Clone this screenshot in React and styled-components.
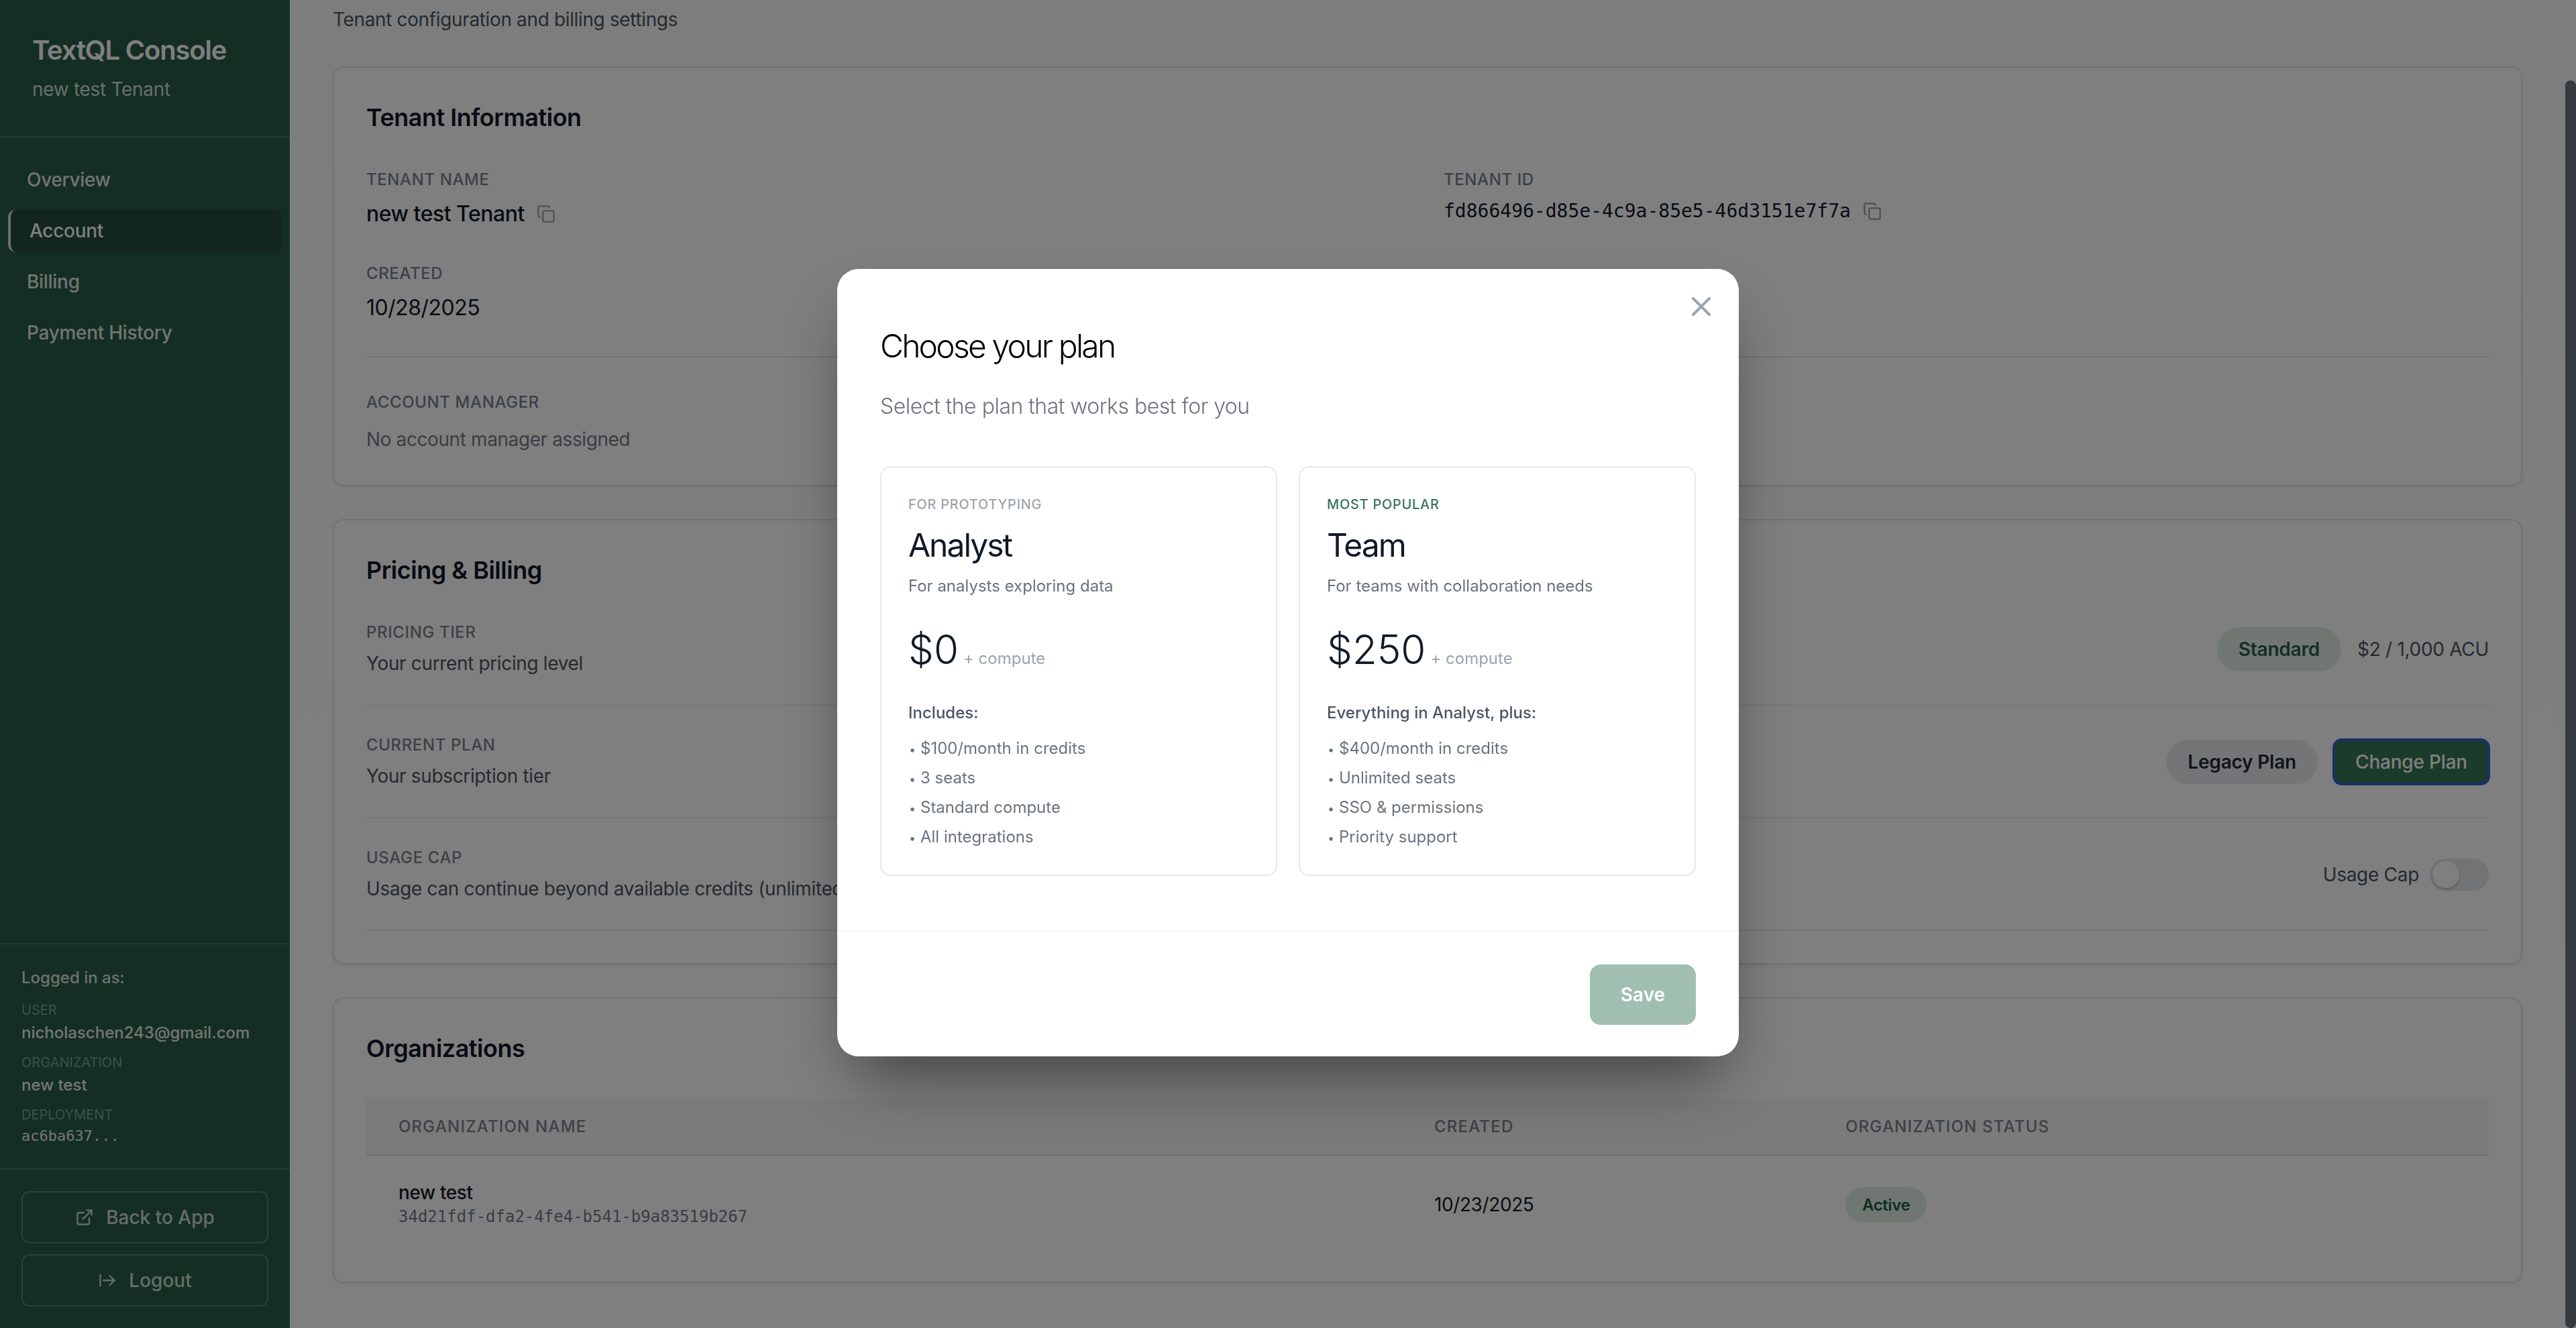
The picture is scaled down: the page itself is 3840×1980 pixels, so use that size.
import React from "react";
import styled, { createGlobalStyle } from "styled-components";
import { Copy, ExternalLink, ArrowRightFromLine, X } from "lucide-react";

const GlobalStyle = createGlobalStyle`
  * { box-sizing: border-box; }
  html, body { margin: 0; padding: 0; height: 100%; overflow: hidden; }
  body { font-family: Inter, "Noto Sans", sans-serif; color: #111827; background: #fff; }
`;

const mono = `"DejaVu Sans Mono", "Liberation Mono", monospace`;

const Shell = styled.div`
  display: flex;
  height: 1980px;
  background: linear-gradient(180deg, #f8fbf9 0%, #ffffff 100%);
`;

/* sidebar */
const Sidebar = styled.aside`
  width: 432px;
  flex: none;
  display: flex;
  flex-direction: column;
  background: #2a5c46;
  color: #fff;
`;
const Brand = styled.div`
  padding: 49px 48px 50px;
  border-bottom: 2px solid #3c7a5e;
`;
const BrandTitle = styled.div`
  font-size: 40px;
  line-height: 52px;
  font-weight: 600;
  letter-spacing: -1.2px;
`;
const BrandSub = styled.div`
  margin-top: 12px;
  font-size: 28px;
  line-height: 40px;
  letter-spacing: -0.3px;
  color: #cfe0d7;
`;
const Nav = styled.nav`
  display: flex;
  flex-direction: column;
  gap: 12px;
  padding: 31px 12px 0;
`;
const NavItem = styled.div`
  display: flex;
  align-items: center;
  height: 64px;
  padding-left: 28px;
  border-radius: 12px;
  font-size: 28px;
  font-weight: 500;
  letter-spacing: -0.3px;
  color: ${(p) => (p.$active ? "#ffffff" : "#e2eae6")};
  background: ${(p) => (p.$active ? "#244c3b" : "transparent")};
  border-left: ${(p) => (p.$active ? "4px solid #d6dfda" : "0")};
`;
const UserBox = styled.div`
  margin-top: auto;
  padding: 34px 32px 32px;
  border-top: 2px solid #3c7a5e;
  border-bottom: 2px solid #3c7a5e;
`;
const LoggedIn = styled.div`
  font-size: 24px;
  line-height: 32px;
  font-weight: 500;
  color: #dbe6e0;
  margin-bottom: 18px;
`;
const UserLabel = styled.div`
  font-size: 20px;
  line-height: 28px;
  color: #6fa98b;
  margin-top: 14px;
  &:first-of-type { margin-top: 0; }
`;
const UserValue = styled.div`
  margin-top: 4px;
  font-size: 24px;
  line-height: 32px;
  font-weight: 500;
  color: #e8eeeb;
  font-family: ${(p) => (p.$mono ? mono : "inherit")};
  ${(p) => p.$mono && "font-size: 22px; font-weight: 400; margin-top: 2px;"}
`;
const SideButtons = styled.div`
  display: flex;
  flex-direction: column;
  gap: 16px;
  padding: 32px;
`;
const SideButton = styled.div`
  height: 78px;
  display: flex;
  align-items: center;
  justify-content: center;
  gap: 18px;
  border: 2px solid #4a8a6c;
  border-radius: 12px;
  font-size: 28px;
  font-weight: 500;
  color: #c9ddd2;
`;

/* main */
const Main = styled.main`
  flex: 1;
  min-width: 0;
  display: flex;
  flex-direction: column;
  gap: 49px;
  padding: 9px 64px 0;
`;
const PageSub = styled.div`
  font-size: 28px;
  line-height: 40px;
  letter-spacing: -0.36px;
  color: #4b5563;
  margin-bottom: 1px;
`;
const Card = styled.section`
  background: #fff;
  border: 2px solid #e2e4e8;
  border-radius: 16px;
  padding: 48px;
  box-shadow: 0 2px 4px rgba(0, 0, 0, 0.06);
`;
const CardTitle = styled.h2`
  margin: 0;
  padding-top: 2px;
  font-size: 36px;
  line-height: 48px;
  font-weight: 600;
  letter-spacing: -0.5px;
  color: #111827;
`;
const InfoGrid = styled.div`
  display: grid;
  grid-template-columns: 1fr 1fr;
  column-gap: 48px;
  row-gap: 51px;
  margin-top: 53px;
  padding-bottom: 50px;
  border-bottom: 2px solid #e5e7eb;
`;
const FieldLabel = styled.div`
  font-size: 24px;
  line-height: 32px;
  font-weight: 500;
  letter-spacing: 0.6px;
  text-transform: uppercase;
  color: #7a808e;
`;
const FieldValue = styled.div`
  display: flex;
  align-items: center;
  gap: 18px;
  margin-top: ${(p) => (p.$mono ? "11px" : "13px")};
  font-family: ${(p) => (p.$mono ? mono : "inherit")};
  font-size: ${(p) => (p.$mono ? "28px" : "32px")};
  line-height: ${(p) => (p.$mono ? "40px" : "44px")};
  letter-spacing: ${(p) => (p.$mono ? "0" : "-0.5px")};
  font-weight: ${(p) => (p.$strong ? 500 : 400)};
  color: #111827;
  svg { color: #9ca3af; flex: none; }
`;
const ManagerBlock = styled.div`
  margin-top: 51px;
`;
const ManagerText = styled.div`
  margin-top: 19px;
  font-size: 28px;
  line-height: 40px;
  letter-spacing: -0.4px;
  color: #757b89;
`;
const SettingRows = styled.div`
  margin-top: 10px;
`;
const SettingRow = styled.div`
  display: flex;
  align-items: center;
  justify-content: space-between;
  padding: 43px 0 41px;
  height: 168px;
  border-bottom: 2px solid #eceef1;
`;
const SettingText = styled.div`
  margin-top: 10px;
  font-size: 28px;
  line-height: 40px;
  letter-spacing: -0.36px;
  color: #4b5563;
  white-space: nowrap;
`;
const SettingRight = styled.div`
  display: flex;
  align-items: center;
  gap: ${(p) => p.$gap || "24px"};
  font-size: 28px;
  letter-spacing: -0.3px;
  color: #4b5563;
`;
const Pill = styled.span`
  display: inline-flex;
  align-items: center;
  height: 66px;
  padding: 0 32px;
  border-radius: 33px;
  font-size: 28px;
  font-weight: 600;
  letter-spacing: -0.2px;
  color: ${(p) => (p.$gray ? "#1f2937" : "#2a5c46")};
  background: ${(p) => (p.$gray ? "#e9ebef" : "#e0efe7")};
`;
const PlanButton = styled.div`
  display: inline-flex;
  align-items: center;
  height: 66px;
  padding: 0 32px;
  border-radius: 12px;
  font-size: 28px;
  font-weight: 500;
  letter-spacing: -0.2px;
  color: #fff;
  background: #367656;
  outline: 4px solid #3560d0;
  outline-offset: -2px;
`;
const Toggle = styled.div`
  width: 88px;
  height: 48px;
  padding: 4px;
  border-radius: 24px;
  background: #e5e7eb;
`;
const ToggleKnob = styled.div`
  width: 40px;
  height: 40px;
  border-radius: 50%;
  background: #fff;
  box-shadow: 0 2px 4px rgba(0, 0, 0, 0.2);
`;
const TableHead = styled.div`
  display: grid;
  grid-template-columns: 1544px 613px 1fr;
  align-items: center;
  height: 85px;
  margin-top: 51px;
  background: #f4f7f5;
  border-bottom: 2px solid #dcdfe3;
`;
const HeadCell = styled.div`
  padding-left: 48px;
  font-size: 24px;
  font-weight: 500;
  letter-spacing: 1.2px;
  text-transform: uppercase;
  color: #7a808e;
`;
const TableRow = styled.div`
  display: grid;
  grid-template-columns: 1544px 613px 1fr;
  align-items: center;
  padding: 37px 0 31px;
`;
const Cell = styled.div`
  padding-left: 48px;
  font-size: 28px;
  letter-spacing: -0.4px;
  color: #111827;
`;
const OrgName = styled.div`
  font-size: 28px;
  line-height: 36px;
  font-weight: 500;
`;
const OrgId = styled.div`
  font-family: ${mono};
  font-size: 24px;
  line-height: 36px;
  letter-spacing: 0;
  color: #757b89;
`;
const StatusPill = styled.span`
  display: inline-flex;
  align-items: center;
  height: 52px;
  padding: 0 25px;
  border-radius: 26px;
  font-size: 24px;
  font-weight: 600;
  color: #1f5c40;
  background: #e0efe7;
`;

/* scrollbar */
const ScrollTrack = styled.div`
  width: 16px;
  flex: none;
  padding-top: 120px;
`;
const ScrollThumb = styled.div`
  height: 100%;
  border-radius: 8px;
  background: #6b7280;
`;

/* modal */
const Overlay = styled.div`
  position: fixed;
  inset: 0;
  display: flex;
  align-items: center;
  justify-content: center;
  padding-bottom: 4px;
  background: rgba(0, 0, 0, 0.5);
`;
const Modal = styled.div`
  position: relative;
  width: 1344px;
  background: #fff;
  border-radius: 32px;
  box-shadow: 0 50px 100px -24px rgba(0, 0, 0, 0.5);
`;
const CloseButton = styled.div`
  position: absolute;
  top: 32px;
  right: 32px;
  display: flex;
  color: #9ca3af;
`;
const ModalBody = styled.div`
  padding: 83px 64px 82px;
`;
const ModalTitle = styled.h2`
  margin: 0;
  font-size: 48px;
  line-height: 64px;
  font-weight: 300;
  letter-spacing: -2.8px;
  color: #000;
`;
const ModalSub = styled.div`
  margin-top: 36px;
  font-size: 32px;
  line-height: 44px;
  font-weight: 300;
  letter-spacing: -0.5px;
  color: #6b7280;
`;
const PlanGrid = styled.div`
  display: grid;
  grid-template-columns: 1fr 1fr;
  gap: 32px;
  margin-top: 67px;
`;
const PlanCard = styled.div`
  border: 2px solid #e5e7eb;
  border-radius: 16px;
  padding: 41px 40px 40px;
`;
const Eyebrow = styled.div`
  font-size: 20px;
  line-height: 28px;
  font-weight: 500;
  letter-spacing: 0.7px;
  text-transform: uppercase;
  color: ${(p) => (p.$green ? "#367656" : "#9ca3af")};
`;
const PlanName = styled.div`
  margin-top: 17px;
  font-size: 48px;
  line-height: 60px;
  font-weight: 400;
  letter-spacing: -2px;
  color: #111827;
`;
const PlanDesc = styled.div`
  margin-top: 15px;
  font-size: 24px;
  line-height: 32px;
  color: #6b7280;
`;
const PriceRow = styled.div`
  display: flex;
  align-items: baseline;
  gap: 7px;
  margin-top: 38px;
  height: 80px;
`;
const Price = styled.span`
  font-size: 60px;
  line-height: 80px;
  font-weight: 300;
  color: #111827;
`;
const PriceNote = styled.span`
  font-size: 24px;
  color: #9ca3af;
`;
const Includes = styled.div`
  margin-top: 39px;
  font-size: 24px;
  line-height: 32px;
  font-weight: 500;
  color: #4b5563;
`;
const FeatureList = styled.ul`
  list-style: none;
  display: flex;
  flex-direction: column;
  gap: 12px;
  margin: 21px 0 0;
  padding: 0;
  font-size: 24px;
  line-height: 32px;
  color: #6b7280;
`;
const Bullet = styled.span`
  display: inline-block;
  width: 18px;
  padding-left: 1px;
  font-size: 18px;
  line-height: 1;
`;
const ModalFooter = styled.div`
  display: flex;
  justify-content: flex-end;
  padding: 48px 64px 47px;
  border-top: 2px solid #f3f4f6;
`;
const SaveButton = styled.div`
  display: flex;
  align-items: center;
  justify-content: center;
  width: 158px;
  height: 90px;
  border-radius: 16px;
  font-size: 28px;
  font-weight: 600;
  color: #fff;
  background: #a0bfb0;
`;

const navItems = ["Overview", "Account", "Billing", "Payment History"];

const plans = [
  {
    eyebrow: "For prototyping",
    name: "Analyst",
    desc: "For analysts exploring data",
    price: "$0",
    heading: "Includes:",
    features: ["$100/month in credits", "3 seats", "Standard compute", "All integrations"],
  },
  {
    eyebrow: "Most popular",
    green: true,
    name: "Team",
    desc: "For teams with collaboration needs",
    price: "$250",
    heading: "Everything in Analyst, plus:",
    features: ["$400/month in credits", "Unlimited seats", "SSO & permissions", "Priority support"],
  },
];

export default function App() {
  return (
    <>
      <GlobalStyle />
      <Shell>
        <Sidebar>
          <Brand>
            <BrandTitle>TextQL Console</BrandTitle>
            <BrandSub>new test Tenant</BrandSub>
          </Brand>
          <Nav>
            {navItems.map((item) => (
              <NavItem key={item} $active={item === "Account"}>{item}</NavItem>
            ))}
          </Nav>
          <UserBox>
            <LoggedIn>Logged in as:</LoggedIn>
            <UserLabel>USER</UserLabel>
            <UserValue>nicholaschen243@gmail.com</UserValue>
            <UserLabel>ORGANIZATION</UserLabel>
            <UserValue>new test</UserValue>
            <UserLabel>DEPLOYMENT</UserLabel>
            <UserValue $mono>ac6ba637...</UserValue>
          </UserBox>
          <SideButtons>
            <SideButton><ExternalLink size={28} />Back to App</SideButton>
            <SideButton><ArrowRightFromLine size={28} />Logout</SideButton>
          </SideButtons>
        </Sidebar>

        <Main>
          <PageSub>Tenant configuration and billing settings</PageSub>

          <Card>
            <CardTitle>Tenant Information</CardTitle>
            <InfoGrid>
              <div>
                <FieldLabel>Tenant Name</FieldLabel>
                <FieldValue $strong>new test Tenant <Copy size={28} /></FieldValue>
              </div>
              <div>
                <FieldLabel>Tenant ID</FieldLabel>
                <FieldValue $mono>fd866496-d85e-4c9a-85e5-46d3151e7f7a <Copy size={28} /></FieldValue>
              </div>
              <div>
                <FieldLabel>Created</FieldLabel>
                <FieldValue>10/28/2025</FieldValue>
              </div>
            </InfoGrid>
            <ManagerBlock>
              <FieldLabel>Account Manager</FieldLabel>
              <ManagerText>No account manager assigned</ManagerText>
            </ManagerBlock>
          </Card>

          <Card>
            <CardTitle>Pricing &amp; Billing</CardTitle>
            <SettingRows>
              <SettingRow>
                <div>
                  <FieldLabel>Pricing Tier</FieldLabel>
                  <SettingText>Your current pricing level</SettingText>
                </div>
                <SettingRight><Pill>Standard</Pill>$2 / 1,000 ACU</SettingRight>
              </SettingRow>
              <SettingRow>
                <div>
                  <FieldLabel>Current Plan</FieldLabel>
                  <SettingText>Your subscription tier</SettingText>
                </div>
                <SettingRight><Pill $gray>Legacy Plan</Pill><PlanButton>Change Plan</PlanButton></SettingRight>
              </SettingRow>
              <SettingRow>
                <div>
                  <FieldLabel>Usage Cap</FieldLabel>
                  <SettingText>Usage can continue beyond available credits (unlimited usage)</SettingText>
                </div>
                <SettingRight $gap="16px">Usage Cap<Toggle><ToggleKnob /></Toggle></SettingRight>
              </SettingRow>
            </SettingRows>
          </Card>

          <Card>
            <CardTitle>Organizations</CardTitle>
            <TableHead>
              <HeadCell>Organization Name</HeadCell>
              <HeadCell>Created</HeadCell>
              <HeadCell>Organization Status</HeadCell>
            </TableHead>
            <TableRow>
              <Cell>
                <OrgName>new test</OrgName>
                <OrgId>34d21fdf-dfa2-4fe4-b541-b9a83519b267</OrgId>
              </Cell>
              <Cell>10/23/2025</Cell>
              <Cell><StatusPill>Active</StatusPill></Cell>
            </TableRow>
          </Card>
        </Main>

        <ScrollTrack><ScrollThumb /></ScrollTrack>
      </Shell>

      <Overlay>
        <Modal>
          <CloseButton><X size={48} strokeWidth={2} /></CloseButton>
          <ModalBody>
            <ModalTitle>Choose your plan</ModalTitle>
            <ModalSub>Select the plan that works best for you</ModalSub>
            <PlanGrid>
              {plans.map((plan) => (
                <PlanCard key={plan.name}>
                  <Eyebrow $green={plan.green}>{plan.eyebrow}</Eyebrow>
                  <PlanName>{plan.name}</PlanName>
                  <PlanDesc>{plan.desc}</PlanDesc>
                  <PriceRow>
                    <Price>{plan.price}</Price>
                    <PriceNote>+ compute</PriceNote>
                  </PriceRow>
                  <Includes>{plan.heading}</Includes>
                  <FeatureList>
                    {plan.features.map((f) => <li key={f}><Bullet>•</Bullet>{f}</li>)}
                  </FeatureList>
                </PlanCard>
              ))}
            </PlanGrid>
          </ModalBody>
          <ModalFooter><SaveButton>Save</SaveButton></ModalFooter>
        </Modal>
      </Overlay>
    </>
  );
}
